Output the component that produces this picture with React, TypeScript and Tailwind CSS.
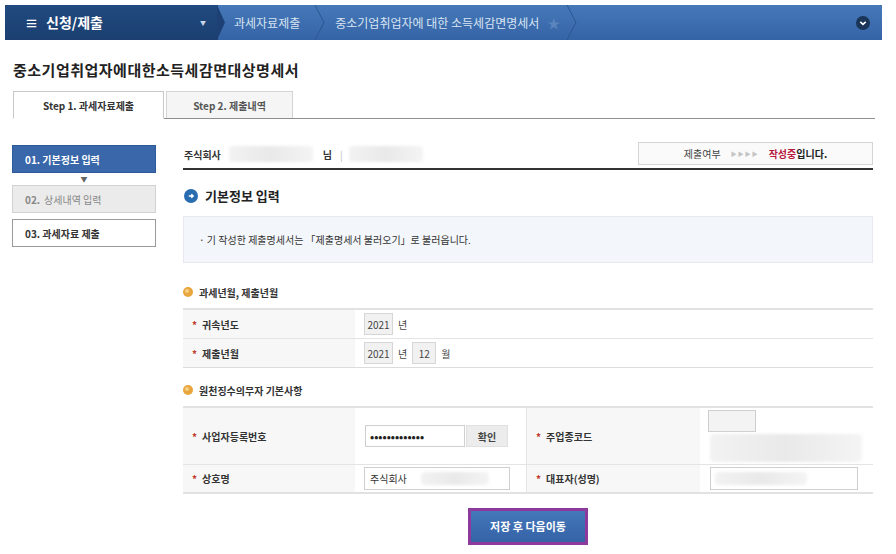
import React from "react";

const KR = { fontFamily: '"Noto Sans CJK KR", "Noto Sans", sans-serif' };

function Chevron({ color = "#24508a" }: { color?: string }) {
  return (
    <svg width="12" height="35" viewBox="0 0 12 35" className="shrink-0">
      <path d="M1 0 L10 17.5 L1 35" fill="none" stroke={color} strokeWidth="1" />
    </svg>
  );
}

function Blur({ w, h, className = "" }: { w: string; h: string; className?: string }) {
  return (
    <div
      className={`${w} ${h} ${className} rounded-sm bg-gradient-to-r from-[#f2f2f2] via-[#e9e9e9] to-[#f4f4f4] blur-[1.5px]`}
    />
  );
}

function Dot({ color }: { color: "blue" | "orange" }) {
  if (color === "blue")
    return (
      <svg width="14" height="14" viewBox="0 0 14 14" className="shrink-0">
        <circle cx="7" cy="7" r="7" fill="#2a6cb0" />
        <path d="M4.8 7 H9 M7.3 5.2 L9.1 7 L7.3 8.8" stroke="#fff" strokeWidth="1.5" fill="none" />
      </svg>
    );
  return (
    <svg width="10" height="10" viewBox="0 0 10 10" className="shrink-0">
      <circle cx="5" cy="5" r="5" fill="#e9a63c" />
      <circle cx="4" cy="4" r="2" fill="#f7d08a" />
    </svg>
  );
}

function Star() {
  return <span className="text-[#5a85bd] text-[13px] leading-none">★</span>;
}

function Req() {
  return <span className="text-[#c0392b] mr-[5px]">*</span>;
}

function SmallBox({ children, w }: { children: React.ReactNode; w: string }) {
  return (
    <span
      className={`${w} h-[22px] inline-flex items-center justify-center border border-[#d6d6d6] bg-[#f1f1f1] text-[10px] text-[#444]`}
    >
      {children}
    </span>
  );
}

export default function App() {
  return (
    <div className="w-[896px] h-[554px] bg-white overflow-hidden relative text-[#222]" style={KR}>
      {/* Header */}
      <div className="ml-[5px] mt-[5px] w-[877px] h-[35px] flex items-stretch bg-gradient-to-b from-[#4678b8] to-[#3564a6]">
        <div className="w-[213px] flex items-center bg-gradient-to-b from-[#214a80] to-[#1b3f70] pl-[20px] pr-[12px]">
          <span className="text-white text-[13px] font-bold mr-[8px]">≡</span>
          <span className="text-white text-[14px] font-bold">신청/제출</span>
          <span className="ml-auto text-[#c8d6e8] text-[6px]">▼</span>
        </div>
        <svg width="8" height="35" viewBox="0 0 8 35" className="shrink-0 -ml-px">
          <path d="M0 0 L8 17.5 L0 35 Z" fill="#1d4174" />
        </svg>
        <div className="flex items-center pl-[9px] pr-[14px] text-[12px] text-[#d8e4f2]">과세자료제출</div>
        <Chevron color="#2a5790" />
        <div className="flex items-center pl-[9px] pr-[6px] text-[12px] text-[#d8e4f2] gap-[8px]">
          <span>중소기업취업자에 대한 소득세감면명세서</span>
          <Star />
        </div>
        <Chevron color="#2a5790" />
        <div className="ml-auto flex items-center pr-[12px]">
          <svg width="14" height="14" viewBox="0 0 14 14">
            <circle cx="7" cy="7" r="7" fill="#1a3558" />
            <path d="M4.3 5.8 L7 8.4 L9.7 5.8" stroke="#fff" strokeWidth="1.6" fill="none" />
          </svg>
        </div>
      </div>

      {/* Title */}
      <div className="pl-[13px] mt-[20px] h-[20px] flex items-center text-[15px] font-bold text-[#222] tracking-[0.5px]">
        중소기업취업자에대한소득세감면대상명세서
      </div>

      {/* Tabs */}
      <div className="ml-[13px] mt-[11px] w-[862px] flex items-end border-b border-[#8f8f8f] h-[28px]">
        <div className="w-[151px] h-[28px] -mb-px bg-white border border-[#c8c8c8] border-b-white flex items-center justify-center text-[10px] font-bold text-[#333]">
          Step 1. 과세자료제출
        </div>
        <div className="ml-[2px] w-[127px] h-[27px] bg-[#f5f5f5] border border-[#d4d4d4] border-b-0 flex items-center justify-center text-[10px] font-bold text-[#555]">
          Step 2. 제출내역
        </div>
      </div>

      {/* Body */}
      <div className="flex mt-[23px]">
        {/* Sidebar */}
        <div className="ml-[12px] w-[144px] mt-[3px] flex flex-col">
          <div className="h-[28px] bg-[#3a67aa] border border-[#2f5a98] flex items-center pl-[12px] text-[10px] font-bold text-white">
            01. 기본정보 입력
          </div>
          <div className="h-[12px] flex items-center justify-center text-[7px] text-[#666]">▼</div>
          <div className="h-[28px] bg-[#ebebeb] border border-[#d2d2d2] flex items-center pl-[12px] text-[10px] text-[#888]">
            <span className="font-bold mr-[4px]">02.</span>상세내역 입력
          </div>
          <div className="mt-[6px] h-[28px] bg-white border border-[#9a9a9a] flex items-center pl-[12px] text-[10px] font-bold text-[#333]">
            03. 과세자료 제출
          </div>
        </div>

        {/* Main */}
        <div className="ml-[27px] w-[690px] flex flex-col">
          {/* top row */}
          <div className="h-[28px] border-b-2 border-[#333] flex items-start">
            <div className="h-[24px] flex items-center text-[10px] font-bold text-[#333] pl-[1px]">
              <span>주식회사</span>
              <Blur w="w-[84px]" h="h-[16px]" className="ml-[8px]" />
              <span className="ml-[10px]">님</span>
              <span className="ml-[8px] text-[#bbb] font-normal">|</span>
              <Blur w="w-[74px]" h="h-[16px]" className="ml-[6px]" />
            </div>
            <div className="ml-auto w-[235px] h-[23px] border border-[#d4d4d4] bg-[#fafafa] flex items-center justify-center text-[10px] text-[#444]">
              <span>제출여부</span>
              <span className="mx-[10px] text-[#c4c4c4] text-[6px] tracking-[1px]">▶▶▶▶</span>
              <span className="font-bold text-[#b8183e]">작성중</span>
              <span className="font-bold text-[#222]">입니다.</span>
            </div>
          </div>

          {/* heading */}
          <div className="mt-[14px] h-[24px] flex items-center gap-[7px] pl-[1px]">
            <Dot color="blue" />
            <span className="text-[13px] font-bold text-[#222]">기본정보 입력</span>
          </div>

          {/* info box */}
          <div className="mt-[8px] h-[47px] bg-[#f3f6fa] border border-[#e6eaf0] flex items-center pl-[15px] text-[10px] text-[#333]">
            · 기 작성한 제출명세서는 「제출명세서 불러오기」로 불러옵니다.
          </div>

          {/* section 1 */}
          <div className="mt-[19px] h-[20px] flex items-center gap-[6px]">
            <Dot color="orange" />
            <span className="text-[10px] font-bold text-[#333]">과세년월, 제출년월</span>
          </div>
          <div className="mt-[6px] border-t-2 border-[#e2e2e2] border-b border-b-[#dcdcdc]">
            <div className="h-[29px] flex border-b border-[#e4e4e4]">
              <div className="w-[172px] bg-[#f7f7f7] flex items-center pl-[9px] text-[10px] font-bold text-[#333]">
                <Req />귀속년도
              </div>
              <div className="flex-1 flex items-center pl-[9px] gap-[5px] text-[10px] text-[#444]">
                <SmallBox w="w-[29px]">2021</SmallBox>
                <span>년</span>
              </div>
            </div>
            <div className="h-[28px] flex">
              <div className="w-[172px] bg-[#f7f7f7] flex items-center pl-[9px] text-[10px] font-bold text-[#333]">
                <Req />제출년월
              </div>
              <div className="flex-1 flex items-center pl-[9px] gap-[5px] text-[10px] text-[#444]">
                <SmallBox w="w-[29px]">2021</SmallBox>
                <span>년</span>
                <SmallBox w="w-[24px]">12</SmallBox>
                <span>월</span>
              </div>
            </div>
          </div>

          {/* section 2 */}
          <div className="mt-[12px] h-[20px] flex items-center gap-[6px]">
            <Dot color="orange" />
            <span className="text-[10px] font-bold text-[#333]">원천징수의무자 기본사항</span>
          </div>
          <div className="mt-[6px] border-t-2 border-[#e2e2e2] border-b-2 border-b-[#e2e2e2]">
            <div className="h-[57px] flex border-b border-[#e4e4e4]">
              <div className="w-[172px] bg-[#f7f7f7] flex items-center pl-[9px] text-[10px] font-bold text-[#333]">
                <Req />사업자등록번호
              </div>
              <div className="w-[172px] flex items-center pl-[10px] border-r border-[#e4e4e4]">
                <div className="w-[100px] h-[22px] border border-[#cfcfcf] bg-white flex items-center pl-[4px] text-[11px] font-bold tracking-[0px] text-[#222]">
                  •••••••••••••
                </div>
                <div className="ml-[1px] w-[42px] h-[22px] bg-[#ececec] border border-[#e0e0e0] flex items-center justify-center text-[10px] font-bold text-[#444]">
                  확인
                </div>
              </div>
              <div className="w-[173px] bg-[#f7f7f7] flex items-center pl-[9px] text-[10px] font-bold text-[#333]">
                <Req />주업종코드
              </div>
              <div className="flex-1 flex flex-col justify-center pl-[8px] gap-[2px]">
                <div className="w-[48px] h-[22px] border border-[#cfcfcf] bg-[#f3f3f3]" />
                <Blur w="w-[152px]" h="h-[28px]" className="ml-[2px]" />
              </div>
            </div>
            <div className="h-[27px] flex">
              <div className="w-[172px] bg-[#f7f7f7] flex items-center pl-[9px] text-[10px] font-bold text-[#333]">
                <Req />상호명
              </div>
              <div className="w-[172px] flex items-center pl-[9px] border-r border-[#e4e4e4]">
                <div className="w-[146px] h-[23px] border border-[#cfcfcf] bg-white flex items-center pl-[5px] text-[10px] text-[#333]">
                  주식회사
                  <Blur w="w-[68px]" h="h-[13px]" className="ml-[14px]" />
                </div>
              </div>
              <div className="w-[173px] bg-[#f7f7f7] flex items-center pl-[9px] text-[10px] font-bold text-[#333]">
                <Req />대표자(성명)
              </div>
              <div className="flex-1 flex items-center pl-[10px]">
                <div className="w-[148px] h-[23px] border border-[#cfcfcf] bg-white flex items-center pl-[4px]">
                  <Blur w="w-[92px]" h="h-[13px]" />
                </div>
              </div>
            </div>
          </div>

          {/* button */}
          <div className="mt-[14px] flex justify-center">
            <div className="w-[120px] h-[37px] border-[3px] border-[#8e3a9c] bg-gradient-to-b from-[#4477bb] to-[#3563a6] flex items-center justify-center text-[11px] font-bold text-white">
              저장 후 다음이동
            </div>
          </div>
        </div>
      </div>
    </div>
  );
}
